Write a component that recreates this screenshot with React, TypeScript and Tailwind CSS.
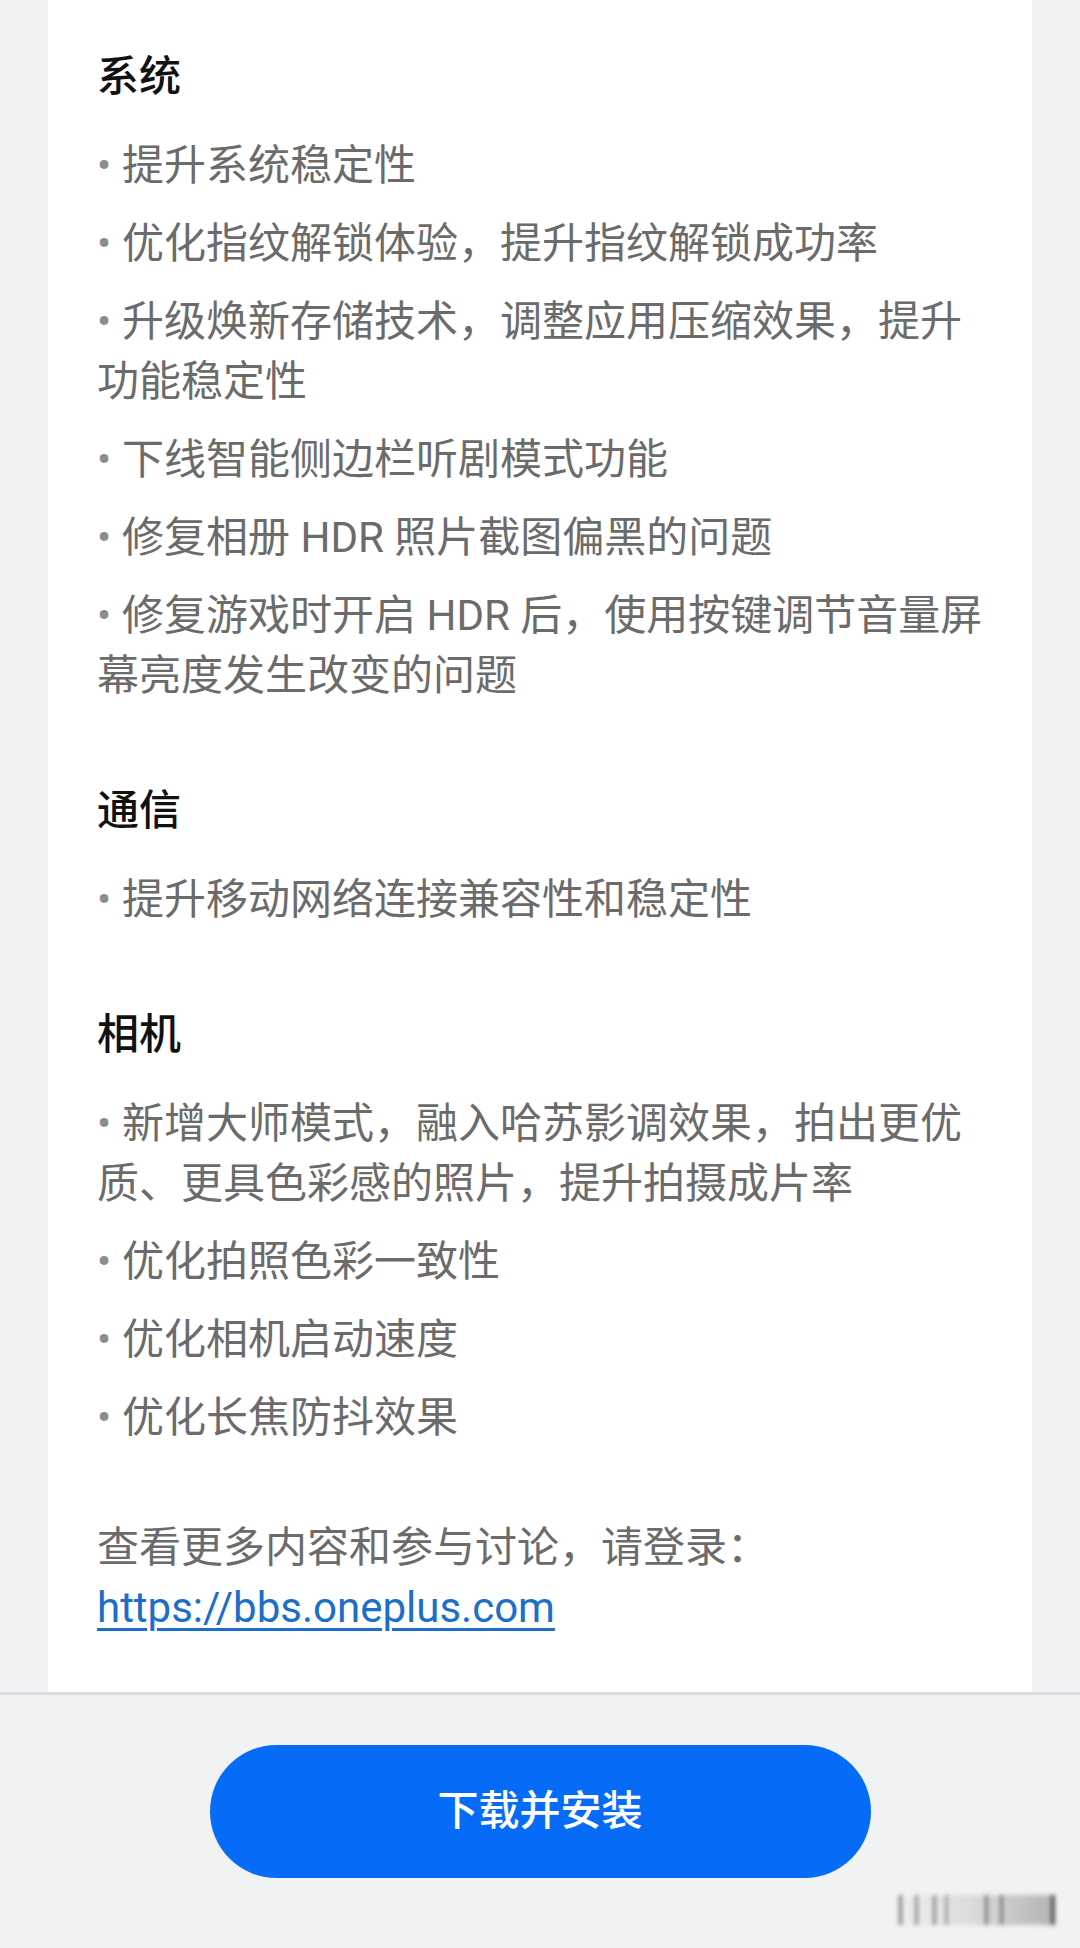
const sections = [
  {
    title: "系统",
    items: [
      "提升系统稳定性",
      "优化指纹解锁体验，提升指纹解锁成功率",
      "升级焕新存储技术，调整应用压缩效果，提升功能稳定性",
      "下线智能侧边栏听剧模式功能",
      "修复相册 HDR 照片截图偏黑的问题",
      "修复游戏时开启 HDR 后，使用按键调节音量屏幕亮度发生改变的问题",
    ],
  },
  {
    title: "通信",
    items: ["提升移动网络连接兼容性和稳定性"],
  },
  {
    title: "相机",
    items: [
      "新增大师模式，融入哈苏影调效果，拍出更优质、更具色彩感的照片，提升拍摄成片率",
      "优化拍照色彩一致性",
      "优化相机启动速度",
      "优化长焦防抖效果",
    ],
  },
];

const font = "font-['Roboto','Noto_Sans_CJK_SC',sans-serif]";

const App = () => {
  return (
    <div
      className={`w-[1080px] h-[1948px] bg-[#f1f2f4] flex flex-col overflow-hidden ${font}`}
    >
      <section className="mx-[48px] h-[1692px] shrink-0 bg-white pt-[47px] pl-[49px] pr-[37px]">
        <div className="flex flex-col gap-[75px]">
          {sections.map((section) => (
            <div key={section.title} className="flex flex-col">
              <h3 className="text-[42px] leading-[60px] font-medium text-[#111111] mb-[29px]">
                {section.title}
              </h3>
              <ul className="flex flex-col gap-[18px]">
                {section.items.map((item) => (
                  <li
                    key={item}
                    className="text-[42px] leading-[60px] text-[#6b6b6b] before:content-['•'] before:inline-block before:w-[25px] before:text-[#8c8c8c]"
                  >
                    {item}
                  </li>
                ))}
              </ul>
            </div>
          ))}
        </div>
        <div className="mt-[70px] flex flex-col">
          <p className="text-[42px] leading-[60px] text-[#6b6b6b]">
            查看更多内容和参与讨论，请登录：
          </p>
          <a
            href="#"
            className="self-start text-[42px] leading-[60px] text-[#1c6fc8] underline decoration-[3px] underline-offset-[6px]"
          >
            https://bbs.oneplus.com
          </a>
        </div>
      </section>
      <div className="h-[3px] bg-[#dadbde] shrink-0" />
      <div className="flex flex-col items-center pt-[50px]">
        <button className="w-[661px] h-[133px] rounded-full bg-[#066cf8] text-white text-[41px] font-medium">
          下载并安装
        </button>
        {/* blurred watermark bottom right */}
        <div className="self-end mr-[25px] mt-[17px] w-[170px] h-[30px] relative blur-[2px] bg-gradient-to-r from-transparent via-[#dcdcdc] to-[#b4b4b4]">
          <div className="absolute left-[14px] top-0 h-full w-[3px] bg-[#7a7a7a]" />
          <div className="absolute left-[30px] top-0 h-full w-[3px] bg-[#8a8a8a]" />
          <div className="absolute left-[48px] top-0 h-full w-[3px] bg-[#8a8a8a]" />
          <div className="absolute left-[60px] top-0 h-full w-[3px] bg-[#9a9a9a]" />
          <div className="absolute left-[100px] top-0 h-full w-[3px] bg-[#7a7a7a]" />
          <div className="absolute left-[115px] top-0 h-full w-[3px] bg-[#7a7a7a]" />
          <div className="absolute right-0 top-0 h-full w-[4px] bg-[#555]" />
        </div>
      </div>
    </div>
  );
};

export default App;
